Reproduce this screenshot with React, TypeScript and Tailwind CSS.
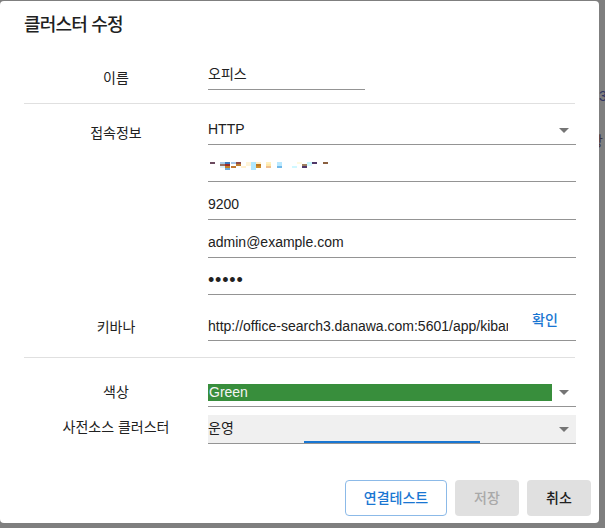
import type { ReactNode } from "react";

const mosaic: [number, number, string][] = [
  // [x, row, colour] — redacted host name, 5x2px tiles
  [2, 0, "#6b4a5e"],
  [12, 0, "#a8c8e8"], [12, 1, "#9a7060"], [12, 2, "#e0f0fa"],
  [17, 0, "#3a7ac0"], [17, 1, "#a02828"], [17, 2, "#c08028"], [17, 3, "#70a8d8"],
  [23, 0, "#a8c8e8"], [23, 2, "#c07830"],
  [28, 0, "#904a48"], [28, 1, "#c08030"],
  [33, 2, "#fff0d0"],
  [38, 0, "#fff4d8"], [38, 1, "#fff4d8"],
  [43, 0, "#b0e8ff"], [43, 1, "#b0e8ff"], [43, 2, "#b0e8ff"], [43, 3, "#b0e8ff"],
  [48, 0, "#fff0c8"], [48, 1, "#c07820"], [48, 2, "#d09028"],
  [58, 0, "#fff0c0"], [58, 1, "#ffe8a8"], [58, 2, "#f0c090"],
  [69, 0, "#b8e8ff"], [69, 1, "#b8e8ff"], [69, 2, "#70b8e8"],
  [84, 2, "#d0f8ff"],
  [89, 0, "#fffae0"],
  [94, 1, "#a08060"], [94, 2, "#503868"],
  [99, 0, "#c8f8ff"], [99, 1, "#d8faff"],
  [104, 0, "#503868"],
  [115, 0, "#8a6040"],
];

function Arrow() {
  return (
    <svg width="10" height="5" viewBox="0 0 10 5" className="mb-[11px] mr-[7px] shrink-0">
      <path d="M0 0h10L5 5z" fill="#757575" />
    </svg>
  );
}

function Row({ label, labelClass, children }: { label?: string; labelClass?: string; children: ReactNode }) {
  return (
    <div className="grid grid-cols-[184px_368px] items-end">
      <div className={`text-center text-[14px] leading-[20px] ${labelClass ?? ""}`}>{label}</div>
      {children}
    </div>
  );
}

export default function App() {
  return (
    <div className="relative w-[605px] h-[528px] overflow-hidden bg-[#7f7f7f] pt-[1px] font-['Liberation_Sans','Noto_Sans_CJK_KR',sans-serif] text-[#212121]">
      {/* page behind the backdrop */}
      <span className="absolute left-[599px] top-[86px] text-[14px] text-[#2f3562]">3.</span>
      <span className="absolute left-[590px] top-[131px] text-[14px] text-[#3a3040]">랑</span>

      <div className="relative w-[599px] rounded-[4px] bg-white">
        <h2 className="px-[24px] pt-[12px] text-[18px] leading-[24px] font-medium tracking-[-0.8px]">
          클러스터 수정
        </h2>

        {/* name */}
        <div className="px-[24px] pt-[23px] pb-[13px]">
          <Row label="이름" labelClass="pb-[2px]">
            <div className="w-[157px] h-[30px] border-b border-[#949494] flex items-end">
              <span className="text-[14px] leading-[20px] pb-[5px]">오피스</span>
            </div>
          </Row>
        </div>
        <div className="mx-[24px] h-px bg-[#e0e0e0]" />

        {/* connection */}
        <div className="px-[24px] pt-[11px] pb-[16px]">
          <Row label="접속정보" labelClass="pb-[2px]">
            <div className="h-[30px] border-b border-[#949494] flex items-end justify-between">
              <span className="text-[14px] leading-[20px] pb-[5px]">HTTP</span>
              <Arrow />
            </div>
          </Row>
          <Row>
            <div className="h-[37px] border-b border-[#949494] flex items-end">
              <svg width="122" height="8" className="mb-[11px]">
                {mosaic.map(([x, r, c], i) => (
                  <rect key={i} x={x} y={r * 2} width="5" height="2" fill={c} />
                ))}
              </svg>
            </div>
          </Row>
          <Row>
            <div className="h-[38px] border-b border-[#949494] flex items-end">
              <span className="text-[14px] leading-[20px] pb-[5px]">9200</span>
            </div>
          </Row>
          <Row>
            <div className="h-[38px] border-b border-[#949494] flex items-end">
              <span className="text-[14px] leading-[20px] pb-[5px]">admin@example.com</span>
            </div>
          </Row>
          <Row>
            <div className="h-[37px] border-b border-[#949494] flex items-end">
              <span className="text-[18px] leading-[20px] pb-[4px] tracking-[0.8px]">•••••</span>
            </div>
          </Row>
          <Row label="키바나" labelClass="pb-[4px]">
            <div className="h-[46px] border-b border-[#949494] flex items-end">
              <span className="w-[300px] overflow-hidden whitespace-nowrap text-[14px] leading-[20px] pb-[4px]">
                http://office-search3.danawa.com:5601/app/kibana
              </span>
              <button className="ml-[24px] pb-[10px] text-[14px] leading-[20px] font-medium text-[#1976d2]">
                확인
              </button>
            </div>
          </Row>
        </div>
        <div className="mx-[24px] h-px bg-[#e0e0e0]" />

        {/* colour & dictionary source */}
        <div className="px-[24px] pt-[19px] flex flex-col gap-[8px]">
          <Row label="색상" labelClass="pb-[5px]">
            <div className="h-[30px] border-b border-[#949494] flex items-end justify-between">
              <div className="w-[344px] h-[17px] mb-[5px] bg-[#388e3c] text-[14px] leading-[17px] text-[#f4f4f4] pl-px">
                Green
              </div>
              <Arrow />
            </div>
          </Row>
          <Row label="사전소스 클러스터" labelClass="pb-[7px]">
            <div className="relative h-[29px] bg-[#f0f0f0] border-b border-[#949494] flex items-end justify-between">
              <span className="text-[14px] leading-[20px] pb-[5px]">운영</span>
              <Arrow />
              <div className="absolute left-[96px] bottom-0 w-[176px] h-[2px] bg-[#1976d2]" />
            </div>
          </Row>
        </div>

        {/* actions */}
        <div className="mt-[36px] pb-[7px] pr-[8px] flex justify-end gap-[8px]">
          <button className="w-[102px] h-[36px] rounded-[4px] border border-[#8cbae8] text-[14px] font-medium text-[#1976d2]">
            연결테스트
          </button>
          <button className="w-[64px] h-[36px] rounded-[4px] bg-[#e0e0e0] text-[14px] font-medium text-[#a9a9a9]">
            저장
          </button>
          <button className="w-[64px] h-[36px] rounded-[4px] bg-[#e0e0e0] text-[14px] font-medium text-[#212121]">
            취소
          </button>
        </div>
      </div>
    </div>
  );
}
